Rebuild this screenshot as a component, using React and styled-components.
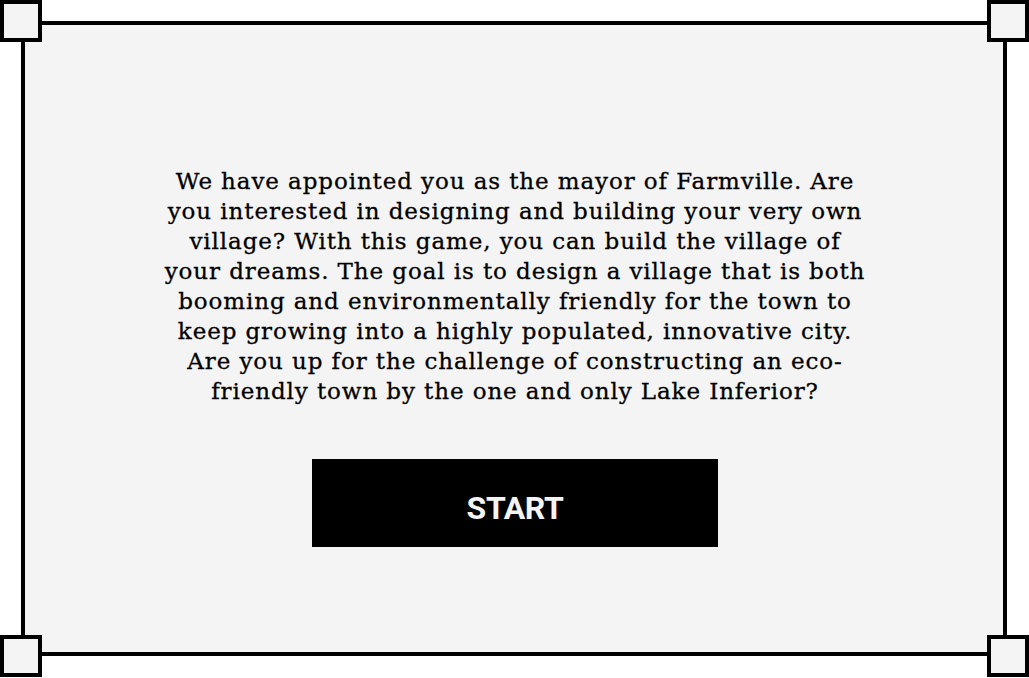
import React from "react";
import styled, { createGlobalStyle } from "styled-components";

const Global = createGlobalStyle`
  html, body { margin: 0; padding: 0; background: #ffffff; }
  #root { width: 1029px; height: 678px; }
`;

const Page = styled.div`
  box-sizing: border-box;
  width: 1029px;
  height: 678px;
  padding: 21px 22px 22px 21px;
`;

const Frame = styled.main`
  position: relative;
  box-sizing: border-box;
  height: 100%;
  border: 4px solid #000;
  background: #f4f4f4;
  display: flex;
  flex-direction: column;
  align-items: center;
  padding-top: 141px;
`;

const Corner = styled.span`
  position: absolute;
  box-sizing: border-box;
  width: 42px;
  height: 42px;
  border: 4px solid #000;
  background: #f4f4f4;
  ${(p) => (p.$v === "top" ? "top: -25px;" : "bottom: -25px;")}
  ${(p) => (p.$h === "left" ? "left: -25px;" : "right: -26px;")}
`;

const Intro = styled.p`
  margin: 0 0 0 2px;
  font-family: "DejaVu Serif", "Liberation Serif", serif;
  font-size: 23px;
  letter-spacing: 0.9px;
  line-height: 30px;
  color: #000;
  -webkit-text-stroke: 0.3px #000;
  text-align: center;
  white-space: nowrap;
`;

const StartButton = styled.button`
  margin: 53px 0 0 2px;
  width: 406px;
  height: 88px;
  border: none;
  background: #000;
  color: #f4f4f4;
  font-family: Roboto, "Liberation Sans", sans-serif;
  font-weight: 700;
  font-size: 32px;
  letter-spacing: -0.4px;
  cursor: pointer;
  padding: 9px 0 0;
`;

const lines = [
  "We have appointed you as the mayor of Farmville. Are",
  "you interested in designing and building your very own",
  "village? With this game, you can build the village of",
  "your dreams. The goal is to design a village that is both",
  "booming and environmentally friendly for the town to",
  "keep growing into a highly populated, innovative city.",
  "Are you up for the challenge of constructing an eco-",
  "friendly town by the one and only Lake Inferior?",
];

export default function App() {
  return (
    <>
      <Global />
      <Page>
        <Frame>
          <Corner $v="top" $h="left" />
          <Corner $v="top" $h="right" />
          <Corner $v="bottom" $h="left" />
          <Corner $v="bottom" $h="right" />
          <Intro>
            {lines.map((l, i) => (
              <React.Fragment key={i}>
                {l}
                {i < lines.length - 1 && <br />}
              </React.Fragment>
            ))}
          </Intro>
          <StartButton type="button">START</StartButton>
        </Frame>
      </Page>
    </>
  );
}
